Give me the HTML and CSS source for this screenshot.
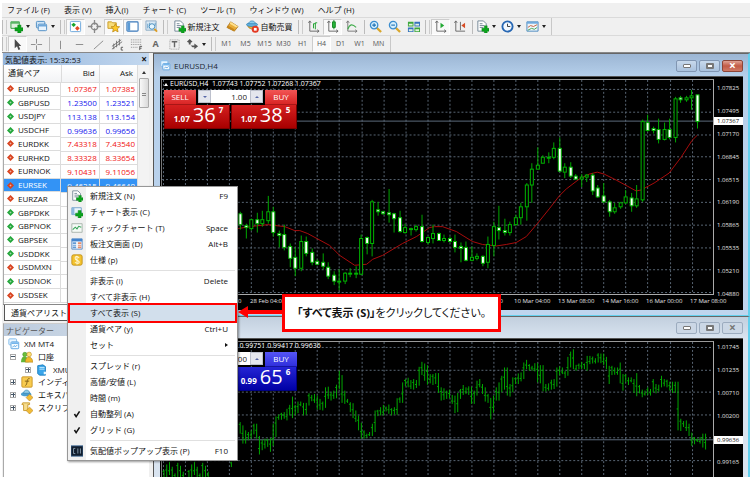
FILE: index.html
```html
<!DOCTYPE html>
<html lang="ja">
<head>
<meta charset="utf-8">
<title>XM MT4</title>
<link rel="stylesheet" href="styles.css">
</head>
<body>
<svg class="sprite" aria-hidden="true">
  <symbol id="plus" viewBox="0 0 8 8"><path d="M3 0h3v3h2v3H6v2H3V6H0V3h3z" fill="#0aa51c" stroke="#067a12" stroke-width=".5"/></symbol>
  <symbol id="i-newchart" viewBox="0 0 14 14"><path d="M1 2h9v7H1z" fill="#dff0df" stroke="#2e9b3c"/><path d="M1 2h9v2H1z" fill="#59b564"/><use href="#plus" x="5" y="5" width="9" height="9"/></symbol>
  <symbol id="i-openchart" viewBox="0 0 14 14"><path d="M1 2h11v8H1z" fill="#eaf4fc" stroke="#6c9cc8"/><path d="M1 2h3v8H1z" fill="#8cb8de"/><use href="#plus" x="5" y="5" width="9" height="9"/></symbol>
  <symbol id="i-profiles" viewBox="0 0 14 14"><rect x="1.5" y="1.5" width="9" height="7" rx="1" fill="#cfe4f6" stroke="#4b8bc4"/><rect x="3.500" y="4.500" width="9" height="7" rx="1" fill="#e8f3fc" stroke="#4b8bc4"/><path d="M4 5h8v2H4z" fill="#6ea7da"/></symbol>
  <symbol id="i-watch" viewBox="0 0 14 14"><rect x="1.500" y="1.500" width="11" height="11" rx="1" fill="#fff" stroke="#69a5da"/><path d="M5 3l2.500 2L5 7.500 2.500 5z" fill="#19a52c"/><path d="M9 6.500l2.500 2.500L9 11.500 6.500 9z" fill="#e34a25"/></symbol>
  <symbol id="i-target" viewBox="0 0 14 14"><circle cx="7" cy="7" r="3.500" fill="none" stroke="#888" stroke-width="1.400"/><path d="M7 0v5M7 9v5M0 7h5M9 7h5" stroke="#888" stroke-width="1.400"/></symbol>
  <symbol id="i-nav" viewBox="0 0 14 14"><path d="M1 2h4l1 1h4v6H1z" fill="#f7dc7a" stroke="#c99925"/><path d="M9 4l1.400 3 3.200.3-2.400 2.200.7 3.300L9 11.200 6.100 12.800l.7-3.300-2.400-2.200 3.200-.3z" fill="#ffc928" stroke="#b98512" stroke-width=".8"/></symbol>
  <symbol id="i-terminal" viewBox="0 0 14 14"><rect x="1" y="2" width="12" height="10" rx="1" fill="#fff" stroke="#3a78ba" stroke-width="1.200"/><path d="M1.500 2.500h3v9h-3z" fill="#5b9bd6"/></symbol>
  <symbol id="i-tester" viewBox="0 0 14 14"><path d="M1 1h11v10H1z" fill="#dceaf5" stroke="#8aaac4"/><path d="M3 9V4M5 8V3M11 6V3" stroke="#5c9cc7"/><circle cx="7.500" cy="7" r="3" fill="#e5f6ff" stroke="#4389bb"/><path d="M10 9.500l3 3" stroke="#dc9c22" stroke-width="2"/></symbol>
  <symbol id="i-order" viewBox="0 0 14 14"><path d="M2 1h6l3 3v8H2z" fill="#fff" stroke="#718595"/><path d="M4 4h3M4 6h5M4 8h4" stroke="#718595"/><use href="#plus" x="6" y="6" width="8" height="8"/></symbol>
  <symbol id="i-gold" viewBox="0 0 14 14"><path d="M5 2l8 5-4 5-8-4z" fill="#e8ac38" stroke="#a36b13" stroke-width=".8"/><path d="M5 2l8 5-2 1-7-4z" fill="#ffe08b"/><path d="M1 8l8 4v-2L2 6z" fill="#c8871b"/></symbol>
  <symbol id="i-auto" viewBox="0 0 14 14"><path d="M2 6c0 4 8 5 9 1" fill="#e6b03a" stroke="#b8811c"/><ellipse cx="6.500" cy="5" rx="6" ry="2" fill="#65b2df" stroke="#2a7db2" stroke-width=".7"/><path d="M3 4c0-4 7-4 7 0z" fill="#8bccee" stroke="#2a7db2" stroke-width=".7"/><circle cx="10" cy="10" r="3.800" fill="#e33922"/><path d="M8.500 8.500h3v3h-3z" fill="#fff"/></symbol>
  <symbol id="i-bars" viewBox="0 0 14 14"><path d="M3 1v11h10M1.500 3L3 1l1.500 2M11 10.500l2 1.500-2 1.500" fill="none" stroke="#666"/><path d="M7 9V4h2M9 10V3h2" stroke="#1ca12c" fill="none"/></symbol>
  <symbol id="i-candle" viewBox="0 0 14 14"><path d="M3 1v11h10M1.500 3L3 1l1.500 2M11 10.500l2 1.500-2 1.500" fill="none" stroke="#666"/><path d="M8.500 0v10" stroke="#12861f"/><path d="M7 2h3v6H7z" fill="#28b63b" stroke="#12861f"/></symbol>
  <symbol id="i-line" viewBox="0 0 14 14"><path d="M3 1v11h10M1.500 3L3 1l1.500 2M11 10.500l2 1.500-2 1.500" fill="none" stroke="#777"/><path d="M3 10c2-6 5-6 9-2" stroke="#42ad4d" fill="none" stroke-width="1.200"/></symbol>
  <symbol id="i-zoomin" viewBox="0 0 14 14"><path d="M8 8l5 5" stroke="#d8a62b" stroke-width="2.400"/><circle cx="5.500" cy="5.500" r="4" fill="#d5effd" stroke="#3b8dcf" stroke-width="1.400"/><path d="M3.500 5.500h4M5.500 3.500v4" stroke="#1c70b5" stroke-width="1.200"/></symbol>
  <symbol id="i-zoomout" viewBox="0 0 14 14"><path d="M8 8l5 5" stroke="#d8a62b" stroke-width="2.400"/><circle cx="5.500" cy="5.500" r="4" fill="#d5effd" stroke="#3b8dcf" stroke-width="1.400"/><path d="M3.500 5.500h4" stroke="#1c70b5" stroke-width="1.200"/></symbol>
  <symbol id="i-tile" viewBox="0 0 14 14"><path d="M1 2h6v5H1zM8 8h6v5H8z" fill="#3ca63b"/><path d="M8 2h6v5H8zM1 8h6v5H1z" fill="#3572bd"/><path d="M2 4h4v2H2zM9 4h4v2H9zM2 10h4v2H2zM9 10h4v2H9z" fill="#e4f3df"/></symbol>
  <symbol id="i-scroll" viewBox="0 0 14 14"><path d="M3 1v11h10M1.500 3L3 1l1.500 2M11 10.500l2 1.500-2 1.500" fill="none" stroke="#666"/><path d="M7 3l4 3-4 3z" fill="#23a934"/></symbol>
  <symbol id="i-shift" viewBox="0 0 14 14"><path d="M3 1v11h10M1.500 3L3 1l1.500 2M8 2v9" fill="none" stroke="#666"/><path d="M13 3L9 6l4 3z" fill="#d64c24"/></symbol>
  <symbol id="i-clock" viewBox="0 0 14 14"><circle cx="7" cy="7" r="5.500" fill="#f1f8ff" stroke="#2767b3" stroke-width="2"/><path d="M7 4v3h3" fill="none" stroke="#333"/></symbol>
  <symbol id="i-template" viewBox="0 0 14 14"><path d="M1 2h12v10H1z" fill="#eff6fb" stroke="#4685bd"/><path d="M1 2h12v2H1z" fill="#6faade"/><path d="M2 8l3-2 3 1 4-2" stroke="#c55d38" fill="none"/><path d="M2 11l4-2 3 1 3-2" stroke="#41a353" fill="none"/></symbol>
  <symbol id="i-cursor" viewBox="0 0 14 14"><path d="M4 1v10l2.500-2L8 13l2-1-1.600-3.500H11z" fill="#4a4a4a"/></symbol>
  <symbol id="i-cross" viewBox="0 0 14 14"><path d="M7 1v5M7 8v5M1 7h5M8 7h5" stroke="#888"/></symbol>
  <symbol id="i-vline" viewBox="0 0 14 14"><path d="M7 3v9" stroke="#888"/></symbol>
  <symbol id="i-hline" viewBox="0 0 14 14"><path d="M3 7h8" stroke="#888"/></symbol>
  <symbol id="i-trend" viewBox="0 0 14 14"><path d="M2 12l10-9" stroke="#888"/></symbol>
  <symbol id="i-channel" viewBox="0 0 14 14"><path d="M1 9l10-7M1 12L12 4M3 6v6M6 3v7M9 1v7" stroke="#666" stroke-width=".9"/><path d="M13 10h-2v3h2" stroke="#555" fill="none"/></symbol>
  <symbol id="i-fibo" viewBox="0 0 14 14"><path d="M1 2h11M1 4.500h11M1 7h11M1 10h7" stroke="#888" stroke-dasharray="1 1"/><path d="M10.500 13v-4h2.500M10.500 11h2" stroke="#555" fill="none"/></symbol>
  <symbol id="i-label" viewBox="0 0 14 14"><path d="M2 2h10v10H2z" fill="none" stroke="#999" stroke-dasharray="1 1"/><path d="M4 4h6M7 4v6" stroke="#666" stroke-width="1.500"/></symbol>
  <symbol id="i-shapes" viewBox="0 0 14 14"><path d="M4 1l3 3-2 1v2H3V5L1 4z" fill="#555"/><path d="M5 8h4V6l4 3-4 3v-2H7z" fill="#555"/></symbol>
  <symbol id="i-windows" viewBox="0 0 14 14"><rect x="1" y="1" width="9" height="7" rx="1" fill="#e7f4ff" stroke="#76b7ea"/><rect x="3.500" y="4.500" width="9" height="8" rx="1" fill="#f5fbff" stroke="#4f9dde"/><path d="M4 5h8v2H4z" fill="#74b5eb"/><path d="M5 11l2-2 2 1 2-2" stroke="#4f9dde" fill="none"/></symbol>
  <symbol id="i-tick" viewBox="0 0 14 14"><path d="M1 2h12v10H1z" fill="#f5faf6" stroke="#a1aea5"/><path d="M2 9l3-3 2 2 2-3 3 1" stroke="#39a459" fill="none" stroke-width="1.200"/></symbol>
  <symbol id="i-depth" viewBox="0 0 14 14"><path d="M1 1h12v12H1z" fill="#f8fbff" stroke="#4c83c3"/><path d="M1 1h12v3H1z" fill="#4384cd"/><path d="M2 5h4v2H2zM2 8h4v1H2zM2 10h4v2H2z" fill="#619bd5"/><path d="M8 5h4v2H8zM8 8h4v1H8zM8 10h4v2H8z" fill="#e58b68"/></symbol>
  <symbol id="i-spec" viewBox="0 0 14 14"><rect x="1" y="1" width="12" height="12" rx="2" fill="#f4c32f" stroke="#bd8c13"/><path d="M9.500 4.500C7-.5 2 5 7 7s2 5-2.500 2.500M7 2v10" transform="translate(0 .3)" fill="none" stroke="#fff7d5" stroke-width="1.200"/></symbol>
  <symbol id="i-check" viewBox="0 0 14 14"><path d="M4 7l2 3 4-6" fill="none" stroke="#111" stroke-width="1.800"/></symbol>
  <symbol id="i-popup" viewBox="0 0 14 14"><path d="M0 1h14v12H0z" fill="#101c2b" stroke="#3a6694"/><path d="M5 4H3v6h2M8 4v6M11 4v6" stroke="#92a8bb" fill="none"/></symbol>
  <symbol id="i-user" viewBox="0 0 14 14"><circle cx="4.500" cy="4" r="2.500" fill="#6abf3b" stroke="#38891b" stroke-width=".6"/><path d="M0 13c0-9 8-9 9 0z" fill="#62b536"/><circle cx="9.500" cy="4" r="2.700" fill="#ffe074" stroke="#ad7c18" stroke-width=".6"/><path d="M5 13c0-8 8-8 9 0z" fill="#f1b92b" stroke="#ad7c18" stroke-width=".6"/></symbol>
  <symbol id="i-server" viewBox="0 0 14 14"><path d="M2 2l6-1 3 2v10H4l-2-2z" fill="#39a5ea" stroke="#1679bb"/><path d="M4 4h6M4 6h6" stroke="#d4f1ff"/><path d="M9 9h3v3H9z" fill="#e8f8ff"/></symbol>
  <symbol id="i-func" viewBox="0 0 14 14"><rect x="1" y="1" width="12" height="12" rx="1" fill="#f8cb4f" stroke="#c69020"/><path d="M10 3c-4-1-2 8-5 8M4.500 6h5" stroke="#765713" fill="none"/></symbol>
  <symbol id="i-hat" viewBox="0 0 14 14"><ellipse cx="6" cy="6" rx="6" ry="2.500" fill="#4b9fd0"/><path d="M3 5c0-5 7-5 7 0z" fill="#91cce9" stroke="#2f7ca9" stroke-width=".7"/><path d="M10 6l4 4-4 4-4-4z" fill="#f2bd36" stroke="#b8811c" stroke-width=".7"/></symbol>
  <symbol id="i-script" viewBox="0 0 14 14"><path d="M2 1h8v2H8v7H3V3H1z" fill="#f6dc8c" stroke="#c69527"/><path d="M10 6l4 4-4 4-4-4z" fill="#f2bd36" stroke="#b8811c" stroke-width=".7"/></symbol>
  <symbol id="i-diamond" viewBox="0 0 10 10"><path d="M5 0l5 5-5 5-5-5z" fill="currentColor"/><path d="M5 3.500v3M3.500 5h3" stroke="#fff" stroke-opacity=".5"/></symbol>
</svg>

<header class="chrome">
  <nav class="menubar">
    <button>ファイル (F)</button><button>表示 (V)</button><button>挿入(I)</button><button>チャート (C)</button><button>ツール (T)</button><button>ウィンドウ (W)</button><button>ヘルプ (H)</button>
  </nav>
  <div class="toolbar">
    <div class="group grip">
      <button class="tool split" aria-label="新規チャート"><svg><use href="#i-newchart"/></svg></button>
      <button class="tool split" aria-label="プロファイル"><svg><use href="#i-profiles"/></svg></button>
    </div>
    <div class="group grip">
      <button class="tool on" aria-label="気配値表示"><svg><use href="#i-watch"/></svg></button>
      <button class="tool" aria-label="データウィンドウ"><svg><use href="#i-target"/></svg></button>
      <button class="tool on" aria-label="ナビゲーター"><svg><use href="#i-nav"/></svg></button>
      <button class="tool on" aria-label="ターミナル"><svg><use href="#i-terminal"/></svg></button>
      <button class="tool" aria-label="テスター"><svg><use href="#i-tester"/></svg></button>
    </div>
    <div class="group grip">
      <button class="tool text"><svg><use href="#i-order"/></svg>新規注文</button>
      <button class="tool" aria-label="エディター"><svg><use href="#i-gold"/></svg></button>
      <button class="tool text"><svg><use href="#i-auto"/></svg>自動売買</button>
    </div>
    <div class="group grip">
      <button class="tool" aria-label="バーチャート"><svg><use href="#i-bars"/></svg></button>
      <button class="tool on" aria-label="ローソク足"><svg><use href="#i-candle"/></svg></button>
      <button class="tool" aria-label="ライン"><svg><use href="#i-line"/></svg></button>
    </div>
    <div class="group line">
      <button class="tool" aria-label="拡大"><svg><use href="#i-zoomin"/></svg></button>
      <button class="tool" aria-label="縮小"><svg><use href="#i-zoomout"/></svg></button>
      <button class="tool" aria-label="整列"><svg><use href="#i-tile"/></svg></button>
    </div>
    <div class="group grip">
      <button class="tool on" aria-label="自動スクロール"><svg><use href="#i-scroll"/></svg></button>
      <button class="tool" aria-label="シフト"><svg><use href="#i-shift"/></svg></button>
    </div>
    <div class="group line end">
      <button class="tool split" aria-label="インディケータ"><svg><use href="#i-order"/></svg></button>
      <button class="tool split" aria-label="時間足"><svg><use href="#i-clock"/></svg></button>
      <button class="tool split" aria-label="定型"><svg><use href="#i-template"/></svg></button>
    </div>
  </div>
  <div class="toolbar">
    <div class="group grip">
      <button class="tool on" aria-label="カーソル"><svg><use href="#i-cursor"/></svg></button>
      <button class="tool" aria-label="クロスヘア"><svg><use href="#i-cross"/></svg></button>
    </div>
    <div class="group line">
      <button class="tool" aria-label="垂直線"><svg><use href="#i-vline"/></svg></button>
      <button class="tool" aria-label="水平線"><svg><use href="#i-hline"/></svg></button>
      <button class="tool" aria-label="トレンドライン"><svg><use href="#i-trend"/></svg></button>
      <button class="tool" aria-label="チャネル"><svg><use href="#i-channel"/></svg></button>
      <button class="tool" aria-label="フィボナッチ"><svg><use href="#i-fibo"/></svg></button>
      <button class="tool letter">A</button>
      <button class="tool" aria-label="ラベル"><svg><use href="#i-label"/></svg></button>
      <button class="tool split" aria-label="矢印"><svg><use href="#i-shapes"/></svg></button>
    </div>
    <div class="group grip end frames">
      <button class="tool">M1</button><button class="tool">M5</button><button class="tool">M15</button><button class="tool">M30</button><button class="tool">H1</button><button class="tool on">H4</button><button class="tool">D1</button><button class="tool">W1</button><button class="tool">MN</button>
    </div>
  </div>
</header>

<div class="workspace">
  <aside class="side">
    <section class="watch">
      <h2 class="panel-title">気配値表示: 15:32:53<button aria-label="閉じる">×</button></h2>
      <div class="watch-body">
        <table class="quotes">
          <thead><tr><th>通貨ペア</th><th>Bid</th><th>Ask</th></tr></thead>
          <tbody>
            <tr class="down"><td><svg><use href="#i-diamond"/></svg>EURUSD</td><td>1.07367</td><td>1.07385</td></tr>
            <tr class="up"><td><svg><use href="#i-diamond"/></svg>GBPUSD</td><td>1.23500</td><td>1.23521</td></tr>
            <tr class="up"><td><svg><use href="#i-diamond"/></svg>USDJPY</td><td>113.138</td><td>113.154</td></tr>
            <tr class="up"><td><svg><use href="#i-diamond"/></svg>USDCHF</td><td>0.99636</td><td>0.99656</td></tr>
            <tr class="down"><td><svg><use href="#i-diamond"/></svg>EURDKK</td><td>7.43318</td><td>7.43540</td></tr>
            <tr class="down"><td><svg><use href="#i-diamond"/></svg>EURHKD</td><td>8.33328</td><td>8.33654</td></tr>
            <tr class="down"><td><svg><use href="#i-diamond"/></svg>EURNOK</td><td>9.10431</td><td>9.11056</td></tr>
            <tr class="down selected"><td><svg><use href="#i-diamond"/></svg>EURSEK</td><td>9.46215</td><td>9.46640</td></tr>
            <tr class="down"><td><svg><use href="#i-diamond"/></svg>EURZAR</td><td></td><td></td></tr>
            <tr class="up"><td><svg><use href="#i-diamond"/></svg>GBPDKK</td><td></td><td></td></tr>
            <tr class="up"><td><svg><use href="#i-diamond"/></svg>GBPNOK</td><td></td><td></td></tr>
            <tr class="up"><td><svg><use href="#i-diamond"/></svg>GBPSEK</td><td></td><td></td></tr>
            <tr class="up"><td><svg><use href="#i-diamond"/></svg>USDDKK</td><td></td><td></td></tr>
            <tr class="down"><td><svg><use href="#i-diamond"/></svg>USDMXN</td><td></td><td></td></tr>
            <tr class="up"><td><svg><use href="#i-diamond"/></svg>USDNOK</td><td></td><td></td></tr>
            <tr class="down"><td><svg><use href="#i-diamond"/></svg>USDSEK</td><td></td><td></td></tr>
          </tbody>
        </table>
        <div class="scrollbar"><i></i><b></b></div>
      </div>
      <div class="tabs"><button>通貨ペアリスト</button></div>
    </section>
    <section class="navigator">
      <h2 class="panel-title dim">ナビゲーター</h2>
      <ul class="tree">
        <li><svg><use href="#i-windows"/></svg>XM MT4</li>
        <li class="l1"><i class="minus"></i><svg><use href="#i-user"/></svg>口座</li>
        <li class="l2"><i></i><svg><use href="#i-server"/></svg>XMUK</li>
        <li class="l1"><i></i><svg><use href="#i-func"/></svg>インディケータ</li>
        <li class="l1"><i></i><svg><use href="#i-hat"/></svg>エキスパート</li>
        <li class="l1"><i></i><svg><use href="#i-script"/></svg>スクリプト</li>
      </ul>
    </section>
  </aside>

  <main class="charts">
    <section class="window active">
      <header class="titlebar">
        <svg><use href="#i-windows"/></svg><h1>EURUSD,H4</h1>
        <div class="controls"><button aria-label="最小化"><i class="min"></i></button><button aria-label="最大化"><i class="max"></i></button><button class="close" aria-label="閉じる">×</button></div>
      </header>
      <div class="chart">
        <svg class="plot" id="chart1" viewBox="162 79 552 216" preserveAspectRatio="none"></svg>
        <div class="prices"><span>1.07825</span><span>1.07495</span><span>1.07170</span><span>1.06845</span><span>1.06515</span><span>1.06190</span><span>1.05865</span><span>1.05535</span><span>1.05210</span><span>1.04880</span><mark>1.07367</mark></div>
        <div class="times"><span></span><span>27 Feb 20:00</span><span>28 Feb 04:00</span><span>1 Mar 12:00</span><span>2 Mar 20:00</span><span>6 Mar 04:00</span><span>7 Mar 12:00</span><span>8 Mar 20:00</span><span>10 Mar 04:00</span><span>13 Mar 08:00</span><span>14 Mar 16:00</span><span>16 Mar 00:00</span><span>17 Mar 08:00</span></div>
        <div class="ohlc">EURUSD,H4&nbsp; 1.07743 1.07752 1.07268 1.07367</div>
        <div class="trade red">
          <button class="side-name">SELL</button>
          <div class="volume"><button class="dn" aria-label="減らす"></button><input value="1.00" aria-label="数量"><button class="upb" aria-label="増やす"></button></div>
          <button class="side-name">BUY</button>
          <button class="quote">1.07<b>36</b><sup>7</sup></button>
          <button class="quote">1.07<b>38</b><sup>5</sup></button>
        </div>
      </div>
    </section>
    <section class="window second">
      <header class="titlebar">
        <div class="controls"><button aria-label="最小化"><i class="min"></i></button><button aria-label="最大化"><i class="max"></i></button><button aria-label="閉じる">×</button></div>
      </header>
      <div class="chart">
        <svg class="plot" id="chart2" viewBox="162 341 552 136" preserveAspectRatio="none"></svg>
        <div class="prices"><span>1.01745</span><span>1.01235</span><span>1.00710</span><span>1.00200</span><span></span><span>0.99165</span><mark>0.99636</mark></div>
        <div class="ohlc">USDCHF,H4&nbsp; 0.99549 0.99751 0.99417 0.99636</div>
        <div class="trade blue">
          <button class="side-name">SELL</button>
          <div class="volume"><button class="dn" aria-label="減らす"></button><input value="1.00" aria-label="数量"><button class="upb" aria-label="増やす"></button></div>
          <button class="side-name">BUY</button>
          <button class="quote">0.99<b>63</b><sup>6</sup></button>
          <button class="quote">0.99<b>65</b><sup>6</sup></button>
        </div>
      </div>
    </section>
  </main>
</div>

<div class="context" role="menu">
  <button role="menuitem"><svg><use href="#i-order"/></svg>新規注文 (N)<kbd>F9</kbd></button>
  <button role="menuitem"><svg><use href="#i-openchart"/></svg>チャート表示 (C)</button>
  <button role="menuitem"><svg><use href="#i-tick"/></svg>ティックチャート (T)<kbd>Space</kbd></button>
  <button role="menuitem"><svg><use href="#i-depth"/></svg>板注文画面 (D)<kbd>Alt+B</kbd></button>
  <button role="menuitem"><svg><use href="#i-spec"/></svg>仕様 (p)</button>
  <hr>
  <button role="menuitem"><svg></svg>非表示 (i)<kbd>Delete</kbd></button>
  <button role="menuitem"><svg></svg>すべて非表示 (H)</button>
  <button role="menuitem" class="hot"><svg></svg>すべて表示 (S)</button>
  <button role="menuitem"><svg></svg>通貨ペア (y)<kbd>Ctrl+U</kbd></button>
  <button role="menuitem"><svg></svg>セット<kbd class="sub"></kbd></button>
  <hr>
  <button role="menuitem"><svg></svg>スプレッド (r)</button>
  <button role="menuitem"><svg></svg>高値/安値 (L)</button>
  <button role="menuitem"><svg></svg>時間 (m)</button>
  <button role="menuitem"><svg><use href="#i-check"/></svg>自動整列 (A)</button>
  <button role="menuitem"><svg><use href="#i-check"/></svg>グリッド (G)</button>
  <hr>
  <button role="menuitem"><svg><use href="#i-popup"/></svg>気配値ポップアップ表示 (P)<kbd>F10</kbd></button>
</div>

<div class="callout">
  <svg class="arrow" viewBox="0 0 47 14"><path d="M0 7l10-6v4h37v4H10v4z" fill="#f00"/></svg>
  <p><strong>「すべて表示 (S)」</strong>をクリックしてください。</p>
</div>
<script src="charts.js"></script>
</body>
</html>
```
FILE: styles.css
```css
* { box-sizing: border-box; }
html, body { height: 100%; }
body {
  margin: 0;
  padding: 3px 0 0 2px;
  display: flex;
  flex-direction: column;
  overflow: hidden;
  position: relative;
  background: #fff;
  color: #111;
  font: 8px/12px "Open Sans", "Noto Sans CJK JP", sans-serif;
}
button, input { font: inherit; color: inherit; border: 0; padding: 0; margin: 0; background: none; }
h1, h2, p, ul { margin: 0; padding: 0; font-size: inherit; font-weight: inherit; }
svg { display: block; flex: none; }
.sprite { position: absolute; width: 0; height: 0; }

/* Menu and toolbars */
.chrome { background: #f0f0f0; border-bottom: 1px solid #888; }
.menubar { display: flex; gap: 14px; height: 14px; padding-left: 5px; }
.toolbar { display: flex; gap: 2px; height: 18px; border-top: 1px solid #dadada; }
.toolbar + .toolbar { height: 17px; }
.group { display: flex; align-items: center; }
.grip::before { content: ""; width: 3px; height: 14px; margin-right: 1px; border-left: 1px solid #bbb; border-right: 1px solid #ccc; }
.line::before { content: ""; width: 1px; height: 14px; margin: 0 1px; background: #bbb; }
.end { border-right: 1px solid #c8c8c8; padding-right: 2px; }
.tool { width: 19px; height: 16px; display: flex; align-items: center; justify-content: center; }
.tool svg { width: 13px; height: 13px; }
.tool.on { background: #f9f9f9; border: 1px solid #ccc; border-right-color: #fff; border-bottom-color: #fff; }
.tool.text { width: 54px; gap: 2px; }
.tool.split { width: 25px; justify-content: flex-start; padding-left: 2px; gap: 3px; }
.tool.split::after { content: ""; border: 2px solid transparent; border-top: 3px solid #222; border-bottom: 0; }
.tool.letter { font-weight: 700; font-size: 9px; color: #666; }
.frames { color: #555; font-size: 7px; }

/* Left panels */
.workspace { flex: 1; min-height: 0; display: grid; grid-template-columns: 151px 1fr; background: #f0f0f0; }
.side { display: flex; flex-direction: column; padding: 0 4px 0 1px; min-height: 0; }
.panel-title { display: flex; justify-content: space-between; align-items: center; height: 12px; line-height: 11px; padding: 0 2px; background: linear-gradient(90deg, #94b5dc, #c3d8ef); }
.panel-title button { font: 700 10px/10px "Open Sans", sans-serif; }
.panel-title.dim { background: linear-gradient(90deg, #bccbdd, #d4dfeb); color: #555; }
.watch { flex: none; height: 270px; display: flex; flex-direction: column; }
.watch-body { flex: 1; min-height: 0; display: flex; overflow: hidden; background: #fff; border-left: 1px solid #aaa; }
.quotes { width: 134px; height: 238px; border-collapse: collapse; table-layout: fixed; }
.quotes th, .quotes td { padding: 0 2px 0 0; border-right: 1px solid #dcdcdc; border-bottom: 1px solid #dcdcdc; text-align: right; line-height: 12px; }
.quotes th { height: 17px; font-weight: 400; background: linear-gradient(#fff, #f2f3f5); padding-right: 4px; }
.quotes th:first-child { width: 57px; text-align: left; padding-left: 4px; }
.quotes td:first-child { display: flex; align-items: center; gap: 4px; padding-left: 3px; height: 100%; }
.quotes td svg { width: 7px; height: 7px; }
.down { color: #f01010; }
.up { color: #1414ee; }
.quotes tbody td:first-child { color: #111; }
.down td svg { color: #d8431f; }
.up td svg { color: #22a63a; }
.quotes .selected, .quotes tbody .selected td:first-child { background: #3393f5; color: #fff; }
.scrollbar { flex: 1; background: #f3f3f3; display: flex; flex-direction: column; align-items: center; padding-top: 6px; }
.scrollbar i { border: 2px solid transparent; border-bottom: 3px solid #333; border-top: 0; }
.scrollbar b { width: 10px; height: 30px; margin-top: 4px; border: 1px solid #aaa; border-radius: 1px; background: linear-gradient(#888, #888) center / 4px 1px no-repeat, linear-gradient(#888, #888) center 16px / 4px 1px no-repeat, linear-gradient(90deg, #f8f8f8, #dadada); }
.tabs { height: 19px; padding-left: 1px; border-top: 1px solid #888; }
.tabs button { height: 16px; padding: 0 6px; background: #fff; border: 1px solid #555; border-top: 0; }
.navigator { flex: 1; min-height: 0; background: #fff; border-top: 1px solid #ccc; border-left: 1px solid #aaa; }
.tree { display: grid; grid-auto-rows: 1fr; height: 76px; list-style: none; margin-top: 2px; }
.tree li { display: flex; align-items: center; gap: 4px; padding-left: 4px; white-space: nowrap; }
.tree svg { width: 12px; height: 12px; }
.tree .l1 { padding-left: 6px; gap: 5px; }
.tree .l2 { padding-left: 21px; gap: 5px; }
.tree i { width: 6px; height: 6px; border: 1px solid #aaa; background: linear-gradient(#456, #456) center / 4px 1px no-repeat, linear-gradient(#456, #456) center / 1px 4px no-repeat, #fff; }
.tree .minus { background: linear-gradient(#456, #456) center / 4px 1px no-repeat, #fff; }

/* Chart windows */
.charts { display: flex; flex-direction: column; min-height: 0; min-width: 0; background: #444; }
.window { display: flex; flex-direction: column; border-left: 1px solid #555; border-top: 1px solid #666; border-right: 2px solid #63d0ee; padding: 0 5px 5px 6px; }
.active { background: linear-gradient(#9cb6d4, #b5cfea 22px, #bfd5ee); border-bottom: 1px solid #63d0ee; }
.second { flex: 1; min-height: 0; padding-bottom: 0; overflow: hidden; background: linear-gradient(#c2cfde, #d9e4f0 22px); }
.titlebar { display: flex; align-items: center; height: 22px; gap: 3px; padding-top: 1px; }
.second .titlebar { height: 21px; }
.titlebar svg { width: 11px; height: 11px; }
.titlebar h1 { flex: 1; color: #1c2733; }
.controls { display: flex; gap: 2px; margin-left: auto; }
.controls button { width: 21px; height: 12px; display: grid; place-items: center; border: 1px solid #8196b2; border-radius: 2px; background: linear-gradient(#c8d9ec, #a9c1dd); color: #777; font: 700 12px/8px "Open Sans", sans-serif; }
.second .controls button { background: #cbd7e5; border-color: #9cacbf; }
.controls button.close { background: linear-gradient(#dfa294, #c25a45 50%, #cf7a66); border-color: #8c4538; color: #fff; }
.min, .max { width: 8px; height: 4px; background: #fff; border: 1px solid #777; border-radius: 1px; }
.max { height: 6px; border-width: 2px; border-color: #777; }
.chart { position: relative; flex: none; display: grid; grid-template: 216px 15px / 1fr 29px; padding: 2px 0 0 1px; background: #000; color: #e4e4e4; font-size: 6px; line-height: 8px; border-top: 1px solid #555; }
.second .chart { grid-template-rows: 136px; }
.plot { width: 100%; height: 100%; border: 1px solid #aaa; border-top-color: #999; border-left-color: #777; }
.second .plot { border-bottom: 0; }
.prices { position: relative; display: grid; grid-template-rows: repeat(10, 1fr); height: 228px; padding-left: 3px; align-items: center; margin-top: -2px; }
.second .prices { grid-template-rows: repeat(6, 1fr); height: 137px; margin-top: -5px; }
.prices mark { position: absolute; top: 40px; left: 0; right: 0; padding-left: 3px; background: #fff; color: #111; }
.second .prices mark { top: 100px; }
.times { grid-column: 1 / -1; display: grid; grid-template-columns: repeat(13, 44px); padding: 2px 0 0 1px; white-space: nowrap; }
.ohlc { position: absolute; left: 4px; top: 3px; display: flex; align-items: center; gap: 2px; font-size: 7px; color: #fff; white-space: nowrap; }
.ohlc::before { content: ""; border: 2px solid transparent; border-bottom: 3px solid #fff; border-top: 0; }
.trade { position: absolute; left: 4px; top: 13px; display: grid; grid-template: 15px 24px / 32px 34px 1px 34px 32px; color: #fff; }
.side-name, .quote { background: linear-gradient(#f25555, #d92525); text-align: center; font-size: 8px; }
.trade > :nth-child(1) { grid-column: 1; }
.trade > :nth-child(2) { grid-column: 2 / 5; }
.trade > :nth-child(3) { grid-column: 5; }
.trade > :nth-child(4) { grid-column: 1 / 3; }
.trade > :nth-child(5) { grid-column: 4 / 6; }
.side-name { border-bottom: 1px solid #a81616; }
.trade .quote { background: linear-gradient(#d52020, #a80000); border: 1px solid #7d0000; border-top: 0; display: flex; align-items: baseline; justify-content: center; gap: 3px; padding-left: 3px; font-weight: 700; line-height: 20px; }
.quote b { font-size: 20px; font-weight: 400; }
.quote sup { align-self: flex-start; font-size: 8px; line-height: 10px; }
.blue .side-name { background: linear-gradient(#5555f5, #3030dc); border-color: #1616a0; }
.trade.blue .quote { background: linear-gradient(#2525d5, #0000a5); border-color: #000080; }
.volume { display: flex; height: 13px; margin: 0 2px; background: #fff; color: #222; font-size: 8px; }
.volume input { flex: 1; width: 10px; text-align: right; padding-right: 3px; }
.volume button { width: 13px; display: grid; place-items: center; background: #e4e6ee; border: 1px solid #bcc0cc; }
.volume button::before { content: ""; border: 2px solid transparent; }
.volume .dn::before { border-top-color: #5868a8; border-bottom: 0; }
.volume .upb::before { border-bottom-color: #5868a8; border-top: 0; }

/* Context menu */
.context { position: absolute; left: 67px; top: 186px; width: 171px; padding: 1px 2px; border: 1px solid #979797; background: linear-gradient(90deg, #f0f0f0 18px, #fff 18px); box-shadow: 1px 1px 2px #0006; }
.context button { display: flex; align-items: center; width: 100%; height: 16px; gap: 7px; padding: 0 7px 0 1px; text-align: left; white-space: nowrap; }
.context svg { width: 12px; height: 12px; }
.context kbd { font: inherit; margin-left: auto; }
.context .sub { border: 2px solid transparent; border-left: 3px solid #111; border-right: 0; }
.context hr { height: 1px; margin: 2px 0 2px 20px; border: 0; background: #e0e0e0; }
.context .hot { background: #d2dfec; outline: 2px solid #f00; }

/* Callout */
.callout { position: absolute; left: 282px; top: 294px; width: 219px; padding: 7px 12px; border: 3px solid #f00; background: #fff; color: #111; }
.callout p { font-size: 11px; line-height: 18px; white-space: nowrap; font-feature-settings: "palt"; }
.callout .arrow { position: absolute; right: 100%; top: 8px; width: 47px; height: 14px; }
```
FILE: charts.js
```js
const NS = "http://www.w3.org/2000/svg";

function add(svg, name, attrs) {
  const el = document.createElementNS(NS, name);
  for (const key in attrs) el.setAttribute(key, attrs[key]);
  svg.appendChild(el);
}

function grid(svg, firstRow, rows, top, bottom, priceY) {
  let d = "";
  for (let i = -1; i < 24; i++) d += `M${Math.round(185 + i * 22.07) + 0.5} ${top}V${bottom}`;
  for (let i = 0; i < rows; i++) d += `M162 ${Math.floor(firstRow + i * 22.8) + 0.5}H714`;
  add(svg, "path", { d, stroke: "#596674", "stroke-dasharray": "2 2", fill: "none" });
  add(svg, "path", { d: `M162 ${priceY}H714`, stroke: "#5d6b7c", fill: "none" });
}

/* Each candle: high, body top, body bottom, low, filled (1) or hollow (0) */
const candles = [
  [212,214,225,230,1],[224,226,228,239,1],[219,220,229,231,0],[213,220,224,233,1],[211,220,224,227,0],
  [196,212,221,224,0],[207,212,233,237,1],[231,234,236,248,1],[225,235,248,251,1],[244,247,259,268,1],
  [248,258,269,277,1],[236,242,269,272,0],[237,242,254,257,1],[249,253,263,266,1],[260,262,265,266,1],
  [254,263,267,270,1],[263,268,277,280,1],[272,276,282,286,1],[270,282,283,291,0],[273,274,282,285,0],
  [269,274,275,278,0],[267,274,275,279,0],[235,239,275,276,0],[237,238,244,255,1],[200,202,244,257,0],
  [202,210,212,216,1],[211,212,214,215,1],[189,213,215,223,1],[213,214,219,233,1],[211,218,232,233,1],
  [224,228,233,234,0],[228,229,230,236,0],[225,227,230,232,0],[215,227,242,243,1],[237,238,243,245,0],
  [225,234,239,244,0],[233,234,241,241,1],[235,239,241,243,0],[237,239,242,243,1],[235,242,248,253,1],
  [243,247,249,263,1],[242,248,261,262,1],[247,258,261,262,0],[254,257,259,261,0],[256,257,264,267,1],
  [237,245,263,269,0],[222,227,246,257,0],[206,228,231,240,1],[219,231,233,236,1],[222,225,233,236,0],
  [215,218,225,226,0],[203,207,218,225,0],[183,185,207,221,0],[163,169,185,203,0],[147,165,169,169,0],
  [155,157,163,163,0],[152,157,158,163,0],[142,148,157,159,0],[137,148,171,172,1],[163,167,172,178,0],
  [162,167,176,178,1],[174,176,179,180,1],[174,177,179,187,0],[174,175,177,182,0],[173,175,191,195,1],
  [185,188,197,198,1],[183,196,202,203,1],[200,202,212,217,1],[203,208,212,214,0],[202,203,207,209,0],
  [190,197,203,204,0],[193,198,206,212,1],[185,199,206,208,0],[119,121,200,202,0],[114,122,130,131,1],
  [126,128,130,133,1],[118,129,139,143,1],[122,129,139,140,0],[118,129,137,139,1],[96,98,137,142,0],
  [95,97,99,102,1],[95,97,99,101,0],[89,95,97,109,0],[94,94,121,128,1]
];

const average = "M238 229L250 227 268 225 285 227 295 231 300 231 308 234 330 246 340 256 355 266 367 265 373 260 383 256 403 244 417 237 430 228 435 227 443 227 457 232 473 242 483 245 497 246.500 507 245 517 243 527 237 538 224 550 209 560 196 567 189 580 179 590 174 598 172 605 174 617 180 628 186 637 191 642 190 655 183 670 173 682 157 693 140 698 135";

const c1 = document.getElementById("chart1");
grid(c1, 88.5, 10, 79, 295, 120.5);
add(c1, "path", { d: average, stroke: "#a80c0c", fill: "none" });
candles.forEach(([high, top, bottom, low, filled], i) => {
  const x = Math.round(240 + i * 5.515);
  add(c1, "path", { d: `M${x + 0.5} ${high}V${top}M${x + 0.5} ${bottom}V${low}`, stroke: "#00a800" });
  add(c1, "rect", {
    x: x - 1, y: top, width: 3, height: Math.max(1, bottom - top),
    fill: filled ? "#fff" : "#000", stroke: "#00b400"
  });
});

/* High and low of each bar, in thirds of a pixel below the header */
const bars = "320,355 330,385 345,385 350,375 345,370 325,357 325,370 362,418 373,405 370,400 370,395 368,410 325,392 303,365 297,313 292,313 290,310 280,315 268,300 243,308 268,300 258,293 258,272 262,300 262,298 233,270 238,257 235,262 240,282 250,283 258,285 215,277 213,250 230,255 225,250 207,248 165,220 178,262 225,265 250,262 260,290 263,308 285,320 300,345 322,370 345,370 355,368 350,362 325,362 285,350 283,302 275,300 268,300 273,288 267,295 278,300 275,297 248,298 245,262 200,262 190,212 186,215 193,220 190,222 193,217 153,210 138,178 143,195 148,207 175,203 175,208 172,205 172,232 215,255 218,253 225,250 222,248 238,265 240,293 232,290 220,250 208,238 215,235 212,238 213,265 225,265 195,240 190,215 205,235 215,258 235,262 247,312 240,292 215,255 200,255 180,230 155,222 155,240 205,243 185,230 185,205 173,205 170,197 140,190 132,160 145,165 150,165 142,167 142,200 148,203 148,227 205,228 203,225 192,222 190,220 155,213 152,178 155,175 165,187 123,180 107,155 100,160 147,165 143,160 138,160 143,160 120,165 120,145 122,143 127,143 112,140 113,142 113,148 123,160 150,205 150,178 155,177 155,177 140,203 175,225 175,200 185,208 185,200 190,232 172,242 208,233 222,245 225,240 215,238 220,240 190,230 205,233 207,228 180,215 190,212 192,215 198,225 198,232 198,232 198,345 310,347 317,335 315,347 325,362 352,392 365,387 370,380 365,385 355,397 355,403";
const earlier = "465,486 448,486 440,480 455,486 475,486 443,486 452,486 470,486";

const c2 = document.getElementById("chart2");
grid(c2, 346.2, 6, 341, 477, 439.5);
function drawBars(list, start) {
  let d = "";
  list.split(" ").forEach((pair, i) => {
    const [high, low] = pair.split(",").map(v => 315 + v / 3);
    const x = start + i * 2.759;
    const swing = (i * 7 % 5) / 5;
    d += `M${x} ${high}V${low}M${x - 1.4} ${high + (low - high) * (0.2 + swing * 0.6)}h1.400`;
  });
  add(c2, "path", { d, stroke: "#00a800", "stroke-width": 1, fill: "none" });
}
drawBars(earlier, 164);
drawBars(earlier, 189);
drawBars("440,456", 231.500);
drawBars(bars, 240.300);
```
